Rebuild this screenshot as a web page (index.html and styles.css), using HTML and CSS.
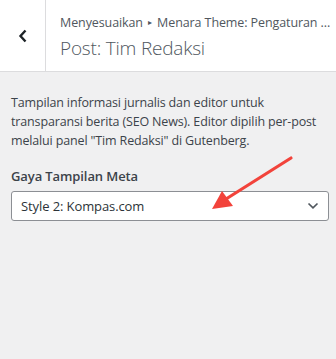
FILE: index.html
```html
<!DOCTYPE html>
<html>
<head>
<meta charset="utf-8">
<link rel="stylesheet" href="styles.css">
</head>
<body>
<div class="panel">
  <header class="head">
    <button class="back" aria-label="Kembali">
      <svg width="10" height="14" viewBox="0 0 10 14"><path d="M7.5 1.5 L2.5 7 L7.5 12.5" fill="none" stroke="#1d2327" stroke-width="2.4"/></svg>
    </button>
    <div class="titles">
      <div class="crumb">Menyesuaikan <span class="tri">▸</span> Menara Theme: Pengaturan ...</div>
      <div class="title">Post: Tim Redaksi</div>
    </div>
  </header>
  <section class="body">
    <p class="desc">Tampilan informasi jurnalis dan editor untuk transparansi berita (SEO News). Editor dipilih per-post melalui panel "Tim Redaksi" di Gutenberg.</p>
    <label class="label">Gaya Tampilan Meta</label>
    <div class="select">
      <span>Style 2: Kompas.com</span>
      <svg width="14" height="10" viewBox="0 0 14 10"><path d="M2.5 2.5 L7 6.8 L11.5 2.5" fill="none" stroke="#50575e" stroke-width="1.7"/></svg>
    </div>
  </section>
  <svg class="arrow" width="336" height="359" viewBox="0 0 336 359">
    <line x1="291" y1="158" x2="226" y2="199" stroke="#f2433b" stroke-width="3.2" stroke-linecap="round"/>
    <polygon points="212,209 222,191 233,206" fill="#f2433b"/>
  </svg>
</div>
</body>
</html>
```
FILE: styles.css
```css
html, body { margin: 0; padding: 0; }
body {
  background: #f0f0f1;
  font-family: "Open Sans", "Noto Sans", sans-serif;
  color: #3c434a;
  width: 336px;
  height: 359px;
  overflow: hidden;
}
.panel { position: relative; height: 359px; }
.head {
  display: flex;
  height: 71px;
  background: #fff;
  border-bottom: 1px solid #dcdcde;
}
.back {
  width: 46px;
  border: 0;
  border-right: 1px solid #dcdcde;
  background: #fff;
  padding: 0;
  display: flex;
  align-items: center;
  justify-content: center;
}
.titles { padding: 12px 0 0 14px; white-space: nowrap; overflow: hidden; }
.crumb { font-size: 12.5px; color: #50575e; line-height: 20px; letter-spacing: -0.1px; }
.tri { font-size: 8px; vertical-align: 2px; margin: 0 2px; }
.title { font-size: 19px; font-weight: 300; color: #50575e; line-height: 28px; margin-top: 1px; letter-spacing: -0.2px; }
.body { padding: 21px 7px 0 11px; }
.desc { margin: 0; font-size: 12.5px; line-height: 19px; color: #3c434a; letter-spacing: -0.15px; }
.label { display: block; margin-top: 16px; font-size: 13px; font-weight: 600; color: #3c434a; line-height: 20px; letter-spacing: -0.1px; }
.select {
  margin-top: 5px;
  height: 28px;
  background: #fff;
  border: 1px solid #8c8f94;
  border-radius: 3px;
  display: flex;
  align-items: center;
  justify-content: space-between;
  padding: 0 8px 0 9px;
  font-size: 13px;
  color: #2c3338;
  letter-spacing: -0.1px;
}
.arrow { position: absolute; left: 0; top: 0; pointer-events: none; }
```
